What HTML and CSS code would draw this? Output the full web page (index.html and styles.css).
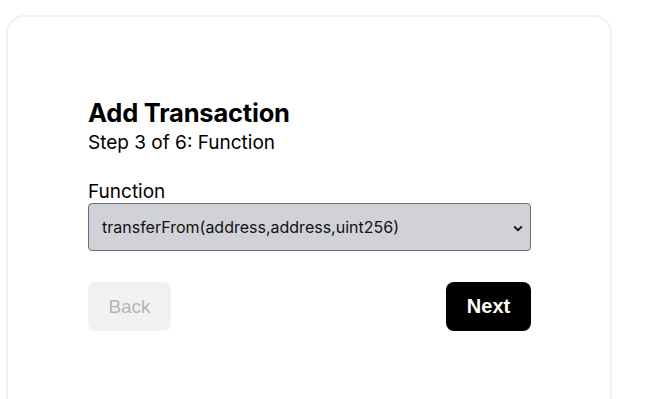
FILE: index.html
```html
<!DOCTYPE html>
<html>
<head>
<meta charset="utf-8">
<link rel="stylesheet" href="styles.css">
</head>
<body>
<div class="card">
  <div class="content">
    <h1 class="title">Add Transaction</h1>
    <div class="subtitle">Step 3 of 6: Function</div>
    <label class="label" for="fn">Function</label>
    <div class="select-wrap">
      <select id="fn" class="select">
        <option>transferFrom(address,address,uint256)</option>
      </select>
      <svg class="chev" width="10" height="7" viewBox="0 0 10 7"><path d="M1.2 1.5 L5 5.2 L8.8 1.5" fill="none" stroke="#111" stroke-width="1.8"/></svg>
    </div>
    <div class="actions">
      <button class="btn back" disabled>Back</button>
      <button class="btn next">Next</button>
    </div>
  </div>
</div>
</body>
</html>
```
FILE: styles.css
```css
html, body {
  margin: 0;
  padding: 0;
  background: #fff;
  font-family: Inter, "Liberation Sans", sans-serif;
  color: #000;
}
body {
  padding: 15px 0 0 6px;
  height: 399px;
  box-sizing: border-box;
  overflow: hidden;
}
.card {
  width: 606px;
  height: 384px;
  box-sizing: border-box;
  border: 2px solid #f1f1f1;
  border-bottom: none;
  border-radius: 18px 18px 0 0;
  padding: 81px 80px 0 80px;
}
.content {
  width: 443px;
  display: flex;
  flex-direction: column;
}
.title {
  margin: 0;
  font-size: 25.5px;
  line-height: 30px;
  font-weight: 700;
  letter-spacing: -0.2px;
}
.subtitle {
  font-size: 19px;
  line-height: 23px;
  margin-top: 3px;
}
.label {
  margin-top: 27px;
  font-size: 19px;
  line-height: 21px;
}
.select-wrap {
  position: relative;
  margin-top: 1px;
}
.select {
  width: 100%;
  height: 48px;
  appearance: none;
  -webkit-appearance: none;
  background: #d1d2d8;
  border: 1px solid #6e6e76;
  border-radius: 4px;
  padding: 0 13px;
  font-family: Inter, "Liberation Sans", sans-serif;
  font-size: 16px;
  color: #111;
  margin: 0;
  display: block;
}
.chev {
  position: absolute;
  right: 8px;
  top: 22px;
  pointer-events: none;
}
.actions {
  display: flex;
  justify-content: space-between;
  margin-top: 31px;
}
.btn {
  height: 49px;
  border: none;
  border-radius: 8px;
  font-family: "Liberation Sans", Arial, sans-serif;
  font-size: 19px;
  padding: 0;
}
.back {
  width: 83px;
  background: #f1f1f1;
  color: #b5b5b5;
}
.next {
  width: 85px;
  background: #000;
  color: #fff;
  font-weight: 700;
  font-size: 20px;
}
```
